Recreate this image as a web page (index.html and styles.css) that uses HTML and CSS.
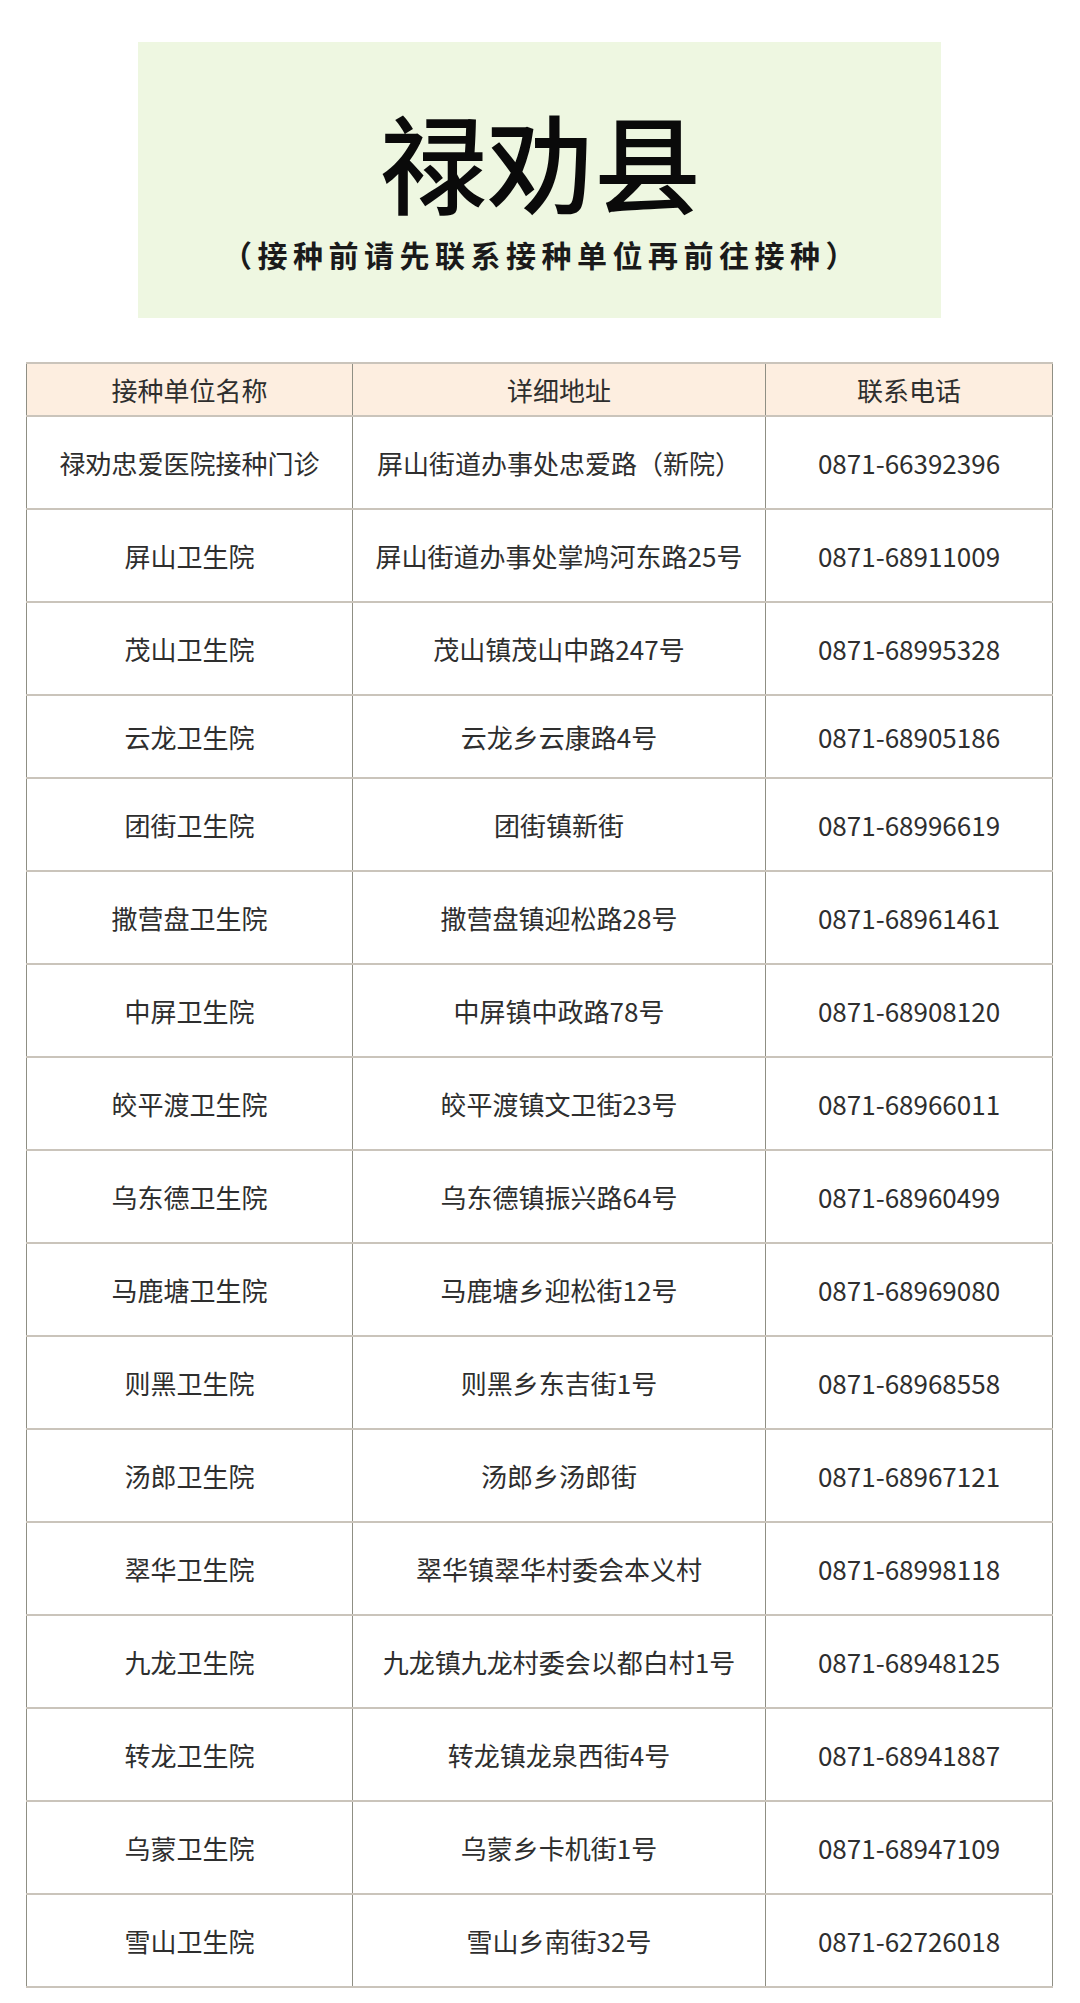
FILE: index.html
```html
<!DOCTYPE html>
<html lang="zh-CN">
<head>
<meta charset="utf-8">
<title>禄劝县</title>
<link rel="stylesheet" href="styles.css">
</head>
<body>
<div class="banner">
  <div class="title">禄劝县</div>
  <div class="subtitle">（接种前请先联系接种单位再前往接种）</div>
</div>
<table class="list">
  <colgroup><col class="c1"><col class="c2"><col class="c3"></colgroup>
  <thead>
    <tr><th>接种单位名称</th><th>详细地址</th><th>联系电话</th></tr>
  </thead>
  <tbody>
    <tr><td>禄劝忠爱医院接种门诊</td><td>屏山街道办事处忠爱路（新院）</td><td>0871-66392396</td></tr>
    <tr><td>屏山卫生院</td><td>屏山街道办事处掌鸠河东路25号</td><td>0871-68911009</td></tr>
    <tr><td>茂山卫生院</td><td>茂山镇茂山中路247号</td><td>0871-68995328</td></tr>
    <tr class="short"><td>云龙卫生院</td><td>云龙乡云康路4号</td><td>0871-68905186</td></tr>
    <tr><td>团街卫生院</td><td>团街镇新街</td><td>0871-68996619</td></tr>
    <tr><td>撒营盘卫生院</td><td>撒营盘镇迎松路28号</td><td>0871-68961461</td></tr>
    <tr><td>中屏卫生院</td><td>中屏镇中政路78号</td><td>0871-68908120</td></tr>
    <tr><td>皎平渡卫生院</td><td>皎平渡镇文卫街23号</td><td>0871-68966011</td></tr>
    <tr><td>乌东德卫生院</td><td>乌东德镇振兴路64号</td><td>0871-68960499</td></tr>
    <tr><td>马鹿塘卫生院</td><td>马鹿塘乡迎松街12号</td><td>0871-68969080</td></tr>
    <tr><td>则黑卫生院</td><td>则黑乡东吉街1号</td><td>0871-68968558</td></tr>
    <tr><td>汤郎卫生院</td><td>汤郎乡汤郎街</td><td>0871-68967121</td></tr>
    <tr><td>翠华卫生院</td><td>翠华镇翠华村委会本义村</td><td>0871-68998118</td></tr>
    <tr><td>九龙卫生院</td><td>九龙镇九龙村委会以都白村1号</td><td>0871-68948125</td></tr>
    <tr><td>转龙卫生院</td><td>转龙镇龙泉西街4号</td><td>0871-68941887</td></tr>
    <tr><td>乌蒙卫生院</td><td>乌蒙乡卡机街1号</td><td>0871-68947109</td></tr>
    <tr><td>雪山卫生院</td><td>雪山乡南街32号</td><td>0871-62726018</td></tr>
  </tbody>
</table>
</body>
</html>
```
FILE: styles.css
```css
html, body {
  margin: 0;
  padding: 0;
  background: #ffffff;
}
body {
  font-family: "Noto Sans CJK SC", "Noto Sans", sans-serif;
  color: #333333;
  padding-top: 42px;
  padding-bottom: 16px;
}
.banner {
  margin-left: 138px;
  width: 803px;
  height: 276px;
  box-sizing: border-box;
  background: #eef7e1;
  padding-top: 62px;
  text-align: center;
}
.title {
  font-size: 107px;
  line-height: 112px;
  font-weight: 500;
  color: #0a0a0a;
  padding-left: 2px;
}
.subtitle {
  margin-top: 18px;
  font-size: 30px;
  line-height: 40px;
  font-weight: 700;
  color: #1a1a1a;
  letter-spacing: 5.5px;
  padding-left: 4px;
}
.list {
  margin-top: 44px;
  margin-left: 26px;
  width: 1026px;
  border-collapse: collapse;
  table-layout: fixed;
}
.c1 { width: 326px; }
.c2 { width: 413px; }
.c3 { width: 287px; }
.list th, .list td {
  text-align: center;
  vertical-align: middle;
  font-size: 26px;
  font-weight: 400;
  color: #2e2e2e;
  padding: 0;
  border-left: 1px solid #8f8f84;
  border-right: 1px solid #8f8f84;
  border-top: 2px solid #cac4bb;
  border-bottom: 2px solid #cac4bb;
}
.list th {
  height: 51px;
  background: #fdeee0;
}
.list td {
  height: 91px;
}
.list tr.short td {
  height: 81px;
}
```
